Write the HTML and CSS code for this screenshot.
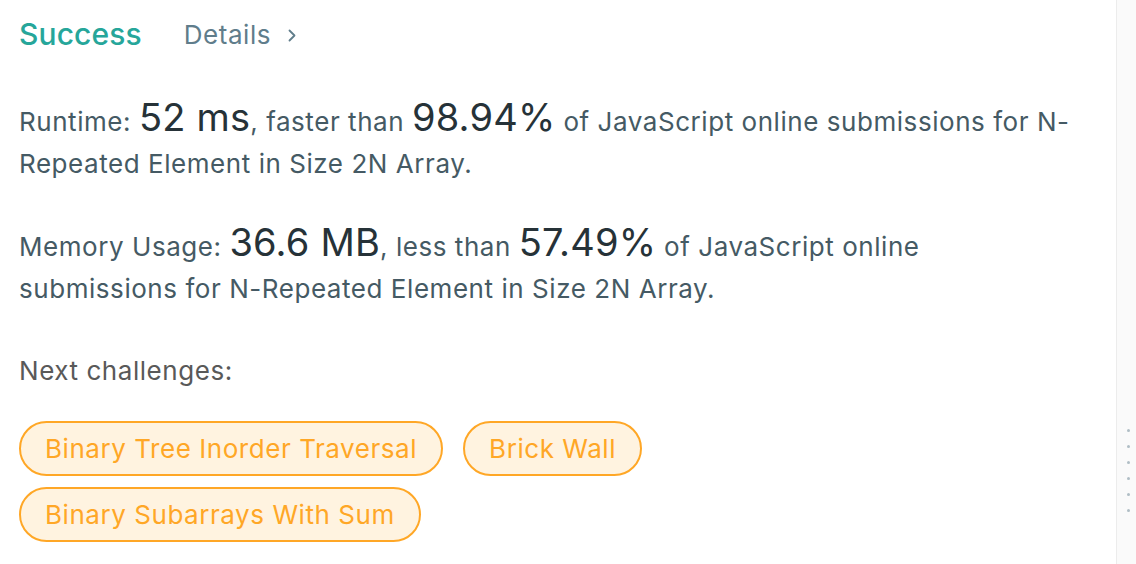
FILE: index.html
```html
<!DOCTYPE html>
<html>
<head>
<meta charset="utf-8">
<link rel="stylesheet" href="styles.css">
</head>
<body>
<div class="layout">
  <main class="panel">
    <div class="header">
      <span class="status">Success</span>
      <a class="details">Details <svg class="chev" width="8" height="13" viewBox="0 0 8 13"><path d="M1.5 1.5 L6.5 6.5 L1.5 11.5" fill="none" stroke="#607d8b" stroke-width="1.8" stroke-linecap="round" stroke-linejoin="round"/></svg></a>
    </div>
    <p class="stat">Runtime: <span class="num">52 ms</span>, faster than <span class="num">98.94%</span> of JavaScript online submissions for N-Repeated Element in Size 2N Array.</p>
    <p class="stat">Memory Usage: <span class="num">36.6 MB</span>, less than <span class="num">57.49%</span> of JavaScript online submissions for N-Repeated Element in Size 2N Array.</p>
    <p class="next">Next challenges:</p>
    <div class="chips">
      <a class="chip">Binary Tree Inorder Traversal</a>
      <a class="chip">Brick Wall</a>
      <a class="chip">Binary Subarrays With Sum</a>
    </div>
  </main>
  <aside class="gutter">
    <div class="handle">
      <span class="dot"></span><span class="dot"></span><span class="dot"></span><span class="dot"></span><span class="dot"></span><span class="dot"></span>
    </div>
  </aside>
</div>
</body>
</html>
```
FILE: styles.css
```css
html, body {
  margin: 0;
  padding: 0;
  background: #fff;
}
body {
  font-family: "Inter", "Noto Sans", sans-serif;
  -webkit-font-smoothing: antialiased;
}
.layout {
  display: flex;
  width: 1136px;
  height: 564px;
  overflow: hidden;
}
.panel {
  width: 1117px;
  flex: none;
  box-sizing: border-box;
  border-right: 1px solid #ececec;
  padding: 14px 40px 0 19px;
}
.header {
  display: flex;
  align-items: center;
  gap: 42px;
  height: 40px;
}
.status {
  font-size: 30px;
  color: #26a69a;
  font-weight: 500;
  letter-spacing: 0.1px;
}
.details {
  font-size: 26px;
  letter-spacing: 0.55px;
  color: #607d8b;
  display: flex;
  align-items: center;
  gap: 17px;
}
.chev {
  margin-top: 2px;
}
.stat {
  margin: 42px 0 0 0;
  font-size: 26px;
  letter-spacing: 0.55px;
  line-height: 42px;
  color: #455a64;
}
.stat + .stat {
  margin-top: 36px;
}
.num {
  font-size: 38px;
  letter-spacing: 0.2px;
  color: #263238;
}
.next {
  margin: 40px 0 0 0;
  font-size: 26px;
  letter-spacing: 0.55px;
  line-height: 42px;
  color: #595959;
}
.chips {
  display: flex;
  flex-wrap: wrap;
  gap: 11px 20px;
  margin-top: 29px;
  width: 660px;
}
.chip {
  display: inline-flex;
  align-items: center;
  height: 55px;
  box-sizing: border-box;
  padding: 0 24px;
  border: 2px solid #ffa726;
  border-radius: 28px;
  background: #fff3e0;
  color: #ffa726;
  font-size: 26px;
  letter-spacing: 0.55px;
}
.gutter {
  flex: 1;
  background: #fafafa;
  display: flex;
  align-items: center;
  justify-content: center;
}
.handle {
  display: flex;
  flex-direction: column;
  gap: 13px;
  margin-top: 376px;
  margin-left: 3px;
}
.dot {
  width: 3px;
  height: 3px;
  border-radius: 50%;
  background: #b0bec5;
}
```
